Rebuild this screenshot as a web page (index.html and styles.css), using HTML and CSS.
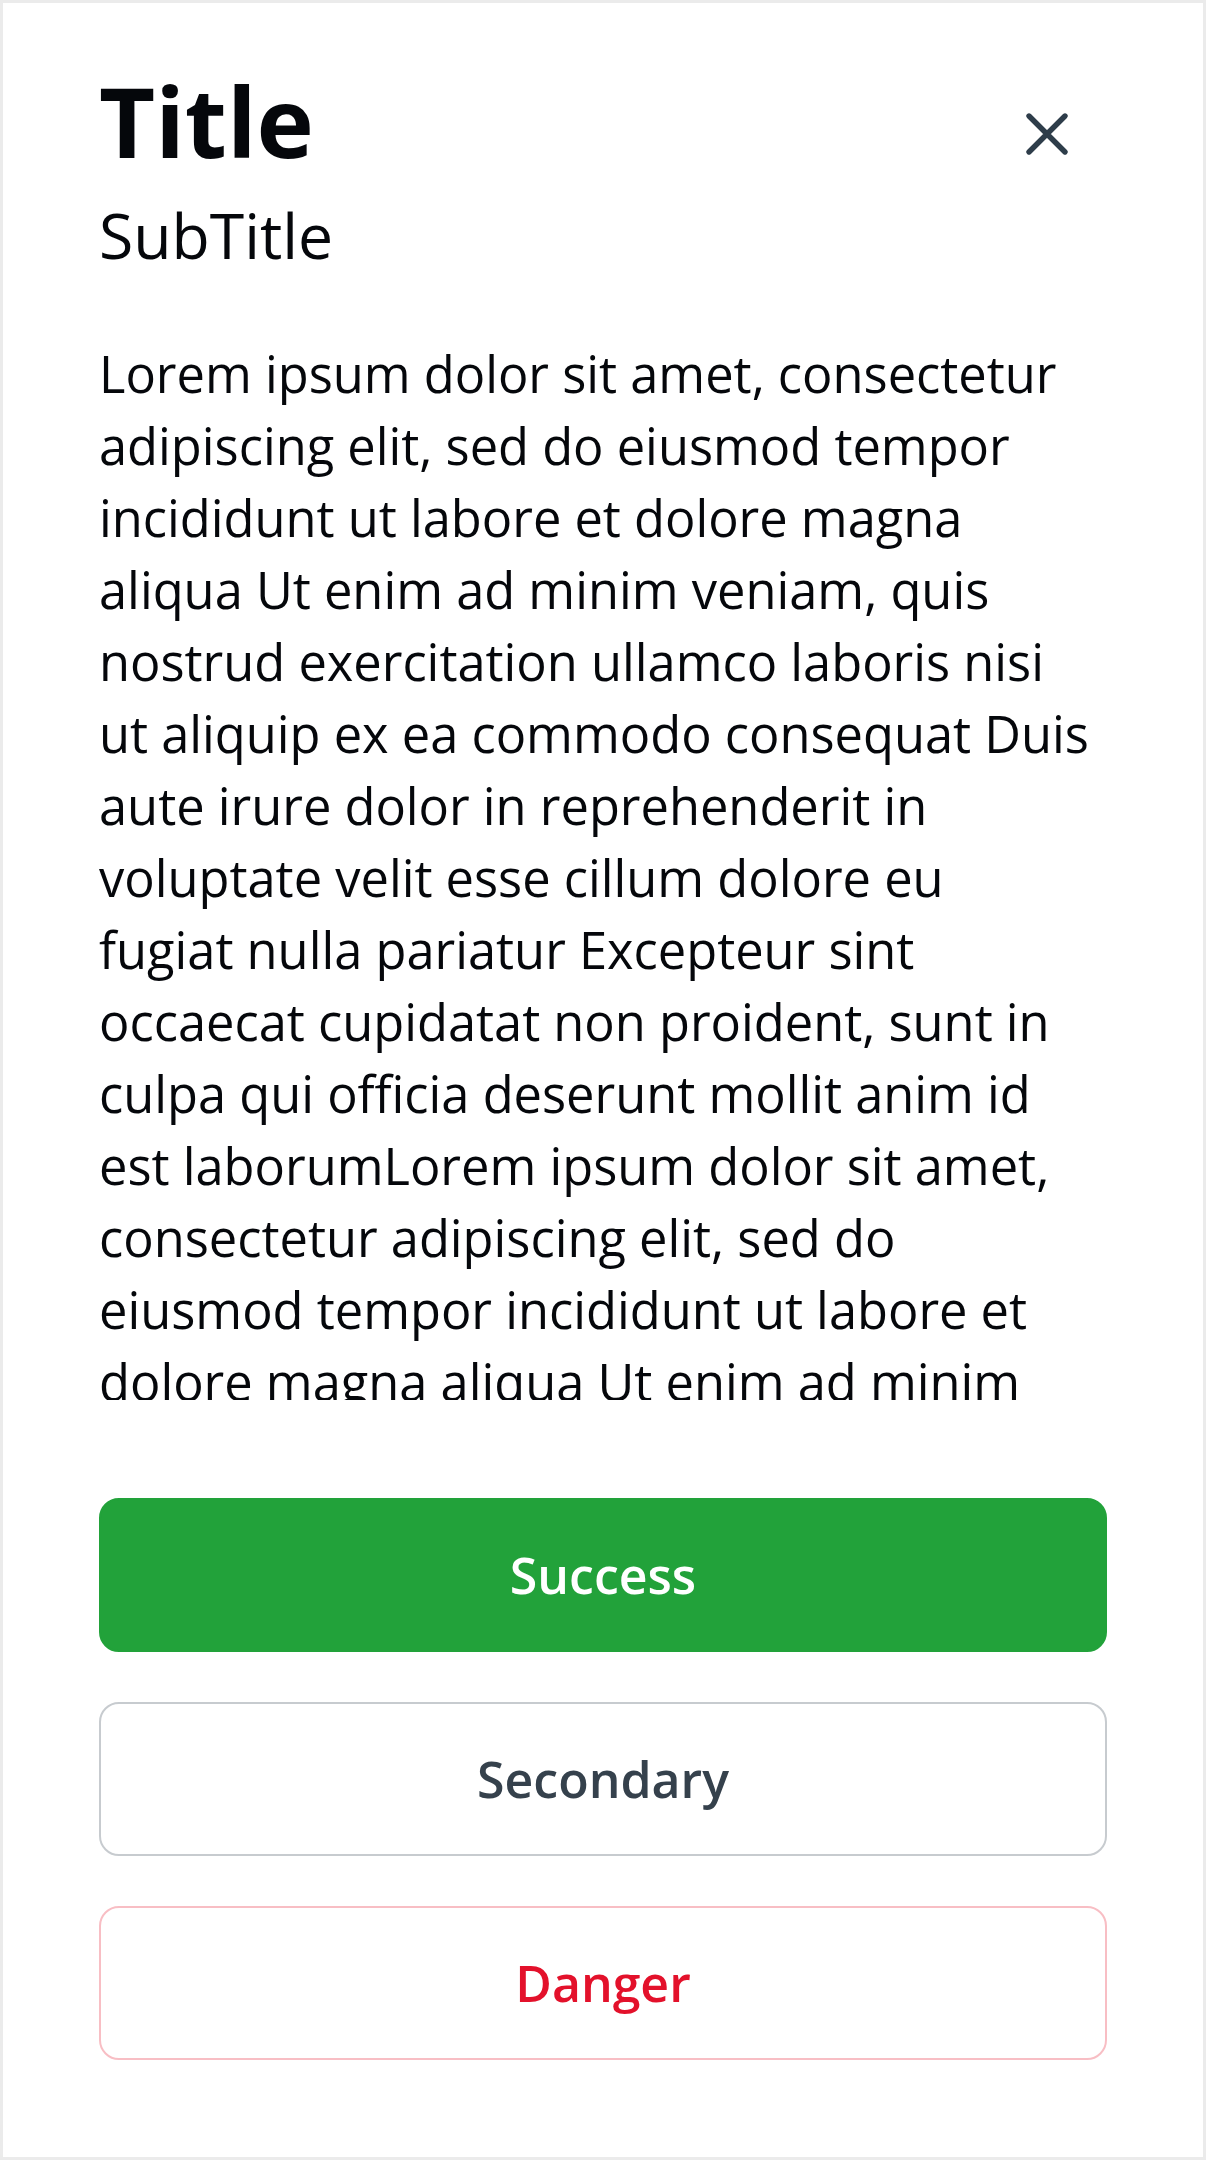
FILE: index.html
```html
<!DOCTYPE html>
<html lang="en">
<head>
<meta charset="utf-8">
<title>Dialog</title>
<link rel="stylesheet" href="styles.css">
</head>
<body>
<div class="sheet">
  <div class="header">
    <div class="titles">
      <h1 class="title">Title</h1>
      <h2 class="subtitle">SubTitle</h2>
    </div>
    <button class="close" aria-label="Close">
      <svg viewBox="0 0 24 24" width="72" height="72" fill="none" stroke="currentColor" stroke-width="1.8" stroke-linecap="round"><path d="M6 6L18 18M18 6L6 18"/></svg>
    </button>
  </div>
  <div class="body">
    <p>Lorem ipsum dolor sit amet, consectetur<br>
adipiscing elit, sed do eiusmod tempor<br>
incididunt ut labore et dolore magna<br>
aliqua Ut enim ad minim veniam, quis<br>
nostrud exercitation ullamco laboris nisi<br>
ut aliquip ex ea commodo consequat Duis<br>
aute irure dolor in reprehenderit in<br>
voluptate velit esse cillum dolore eu<br>
fugiat nulla pariatur Excepteur sint<br>
occaecat cupidatat non proident, sunt in<br>
culpa qui officia deserunt mollit anim id<br>
est laborumLorem ipsum dolor sit amet,<br>
consectetur adipiscing elit, sed do<br>
eiusmod tempor incididunt ut labore et<br>
dolore magna aliqua Ut enim ad minim<br>
veniam, quis nostrud exercitation ullamco<br>
laboris nisi ut aliquip ex ea commodo<br>
consequat</p>
  </div>
  <div class="actions">
    <button class="btn btn-success">Success</button>
    <button class="btn btn-secondary">Secondary</button>
    <button class="btn btn-danger">Danger</button>
  </div>
</div>
</body>
</html>
```
FILE: styles.css
```css
* { box-sizing: border-box; }
html, body { margin: 0; padding: 0; background: #ffffff; }
body { font-family: "Open Sans", "Noto Sans", sans-serif; color: #0a0c10; }

.sheet {
  width: 1206px;
  height: 2160px;
  border: 3px solid #ebebeb;
  padding: 69px 96px 97px 96px;
  display: flex;
  flex-direction: column;
  background: #ffffff;
}

.header {
  display: flex;
  justify-content: space-between;
  align-items: flex-start;
}

.titles { display: flex; flex-direction: column; }

.title {
  margin: 0;
  font-size: 97px;
  line-height: 96px;
  font-weight: 700;
  color: #05070b;
}

.subtitle {
  margin: 36px 0 0 0;
  font-size: 62.5px;
  line-height: 61px;
  font-weight: 400;
  color: #05070b;
}

.close {
  margin: 26px 24px 0 0;
  width: 72px;
  height: 72px;
  padding: 0;
  border: 0;
  background: transparent;
  color: #2e3d4a;
  display: flex;
  align-items: center;
  justify-content: center;
}
.close svg { display: block; }

.body {
  margin-top: 73px;
  height: 1062px;
  overflow: hidden;
}
.body p {
  margin: 0;
  font-size: 50.6px;
  line-height: 72px;
  white-space: nowrap;
  color: #05070b;
}

.actions {
  margin-top: 98px;
  display: flex;
  flex-direction: column;
  gap: 50px;
}

.btn {
  height: 154px;
  width: 100%;
  border-radius: 20px;
  font-family: "Open Sans", "Noto Sans", sans-serif;
  font-size: 50px;
  font-weight: 600;
  display: flex;
  align-items: center;
  justify-content: center;
  padding: 0;
  background: #ffffff;
}

.btn-success {
  background: #22a23a;
  border: 2px solid #22a23a;
  color: #ffffff;
}

.btn-secondary {
  border: 2px solid #c7cbcf;
  color: #35414c;
}

.btn-danger {
  border: 2px solid #f8bec4;
  color: #e3112b;
}
```
